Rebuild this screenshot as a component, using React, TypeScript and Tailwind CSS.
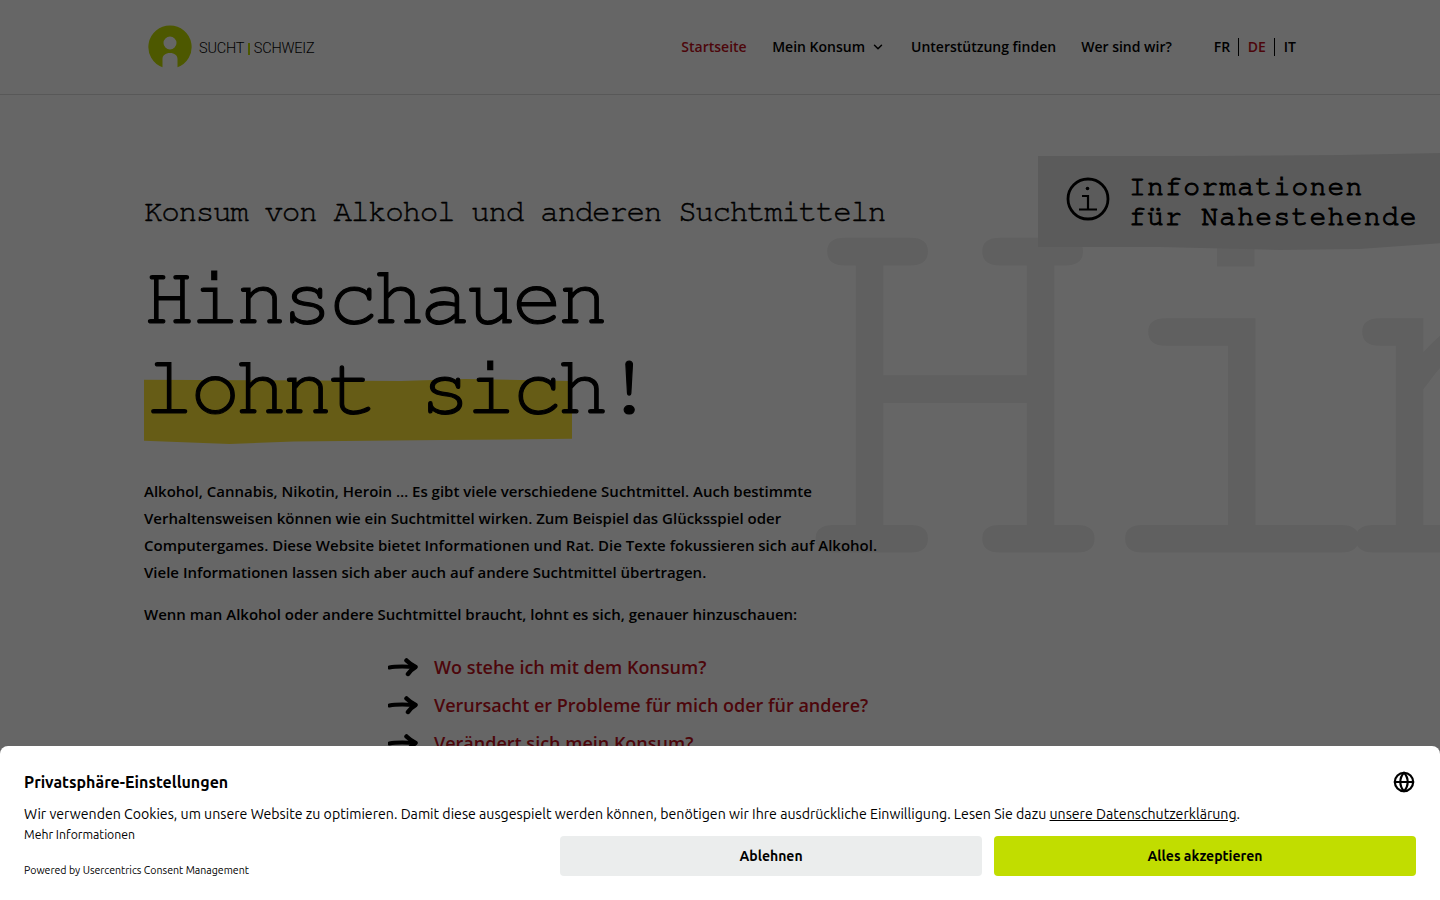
import { Globe, ChevronDown } from "lucide-react";

const mono = "font-['FreeMono','Liberation_Mono',monospace]";
const sans = "font-['Open_Sans',sans-serif]";
const ui = "font-['Ubuntu','Noto_Sans',sans-serif]";

function Logo() {
  return (
    <div className="flex items-center ml-1 gap-[7px]">
      <svg width="44" height="44" viewBox="0 0 44 44">
        <path
          fill="#c1dd00"
          fillRule="evenodd"
          d="M22 0.500a21.500 21.500 0 0 1 7.500 41.700V34c0-3.500-3-6-7.500-6s-7.500 2.500-7.500 6v8.200A21.500 21.500 0 0 1 22 .5zM22 11.500a6.500 6.500 0 1 0 0 13 6.500 6.500 0 0 0 0-13z"
        />
      </svg>
      <div className="flex items-center text-[14.500px] font-light text-black font-['Roboto',sans-serif] tracking-[-0.2px] mt-[3px]">
        <span>SUCHT</span>
        <span className="mx-[4px] h-[12px] w-[1.500px] bg-[#c1dd00]" />
        <span>SCHWEIZ</span>
      </div>
    </div>
  );
}

function Header() {
  const item = "text-[14px] leading-5 font-semibold";
  return (
    <header className={`h-[95px] border-b border-[#dcdcdc] text-black ${sans}`}>
      <div className="mx-36 h-full flex items-center justify-between">
        <Logo />
        <nav className="flex items-center">
          <span className={`${item} text-[#c0101c] mr-[25.500px]`}>Startseite</span>
          <span className={`${item} flex items-center mr-[26px]`}>
            Mein Konsum
            <ChevronDown size={14} strokeWidth={2.500} className="ml-[6px]" />
          </span>
          <span className={`${item} mr-[25px]`}>Unterstützung finden</span>
          <span className={`${item} mr-[42px]`}>Wer sind wir?</span>
          <span className={`${item}`}>FR</span>
          <span className="ml-[7.500px] mr-2 w-px h-[18px] bg-black" />
          <span className={`${item} text-[#c0101c] ml-[1px]`}>DE</span>
          <span className="mx-2 w-px h-[18px] bg-black" />
          <span className={`${item} ml-[1px]`}>IT</span>
        </nav>
      </div>
    </header>
  );
}

function Arrow() {
  return (
    <svg width="30" height="20" viewBox="0 0 30 20" className="shrink-0">
      <path d="M1.500 10.500 C9 9 18 9.500 27 10" stroke="#000" strokeWidth="4" fill="none" strokeLinecap="round" />
      <path d="M18.500 3.500 C21 6 24 8 27.500 10 C24 12 22 14 20 17" stroke="#000" strokeWidth="4.500" fill="none" strokeLinecap="round" strokeLinejoin="round" />
    </svg>
  );
}

function ListItem({ children }: { children: string }) {
  return (
    <li className="flex items-center gap-[16px] h-[38px]">
      <Arrow />
      <span className={`text-[18px] font-semibold text-[#c0101c] ${sans}`}>{children}</span>
    </li>
  );
}

function Hero() {
  return (
    <main className="relative mx-36 pt-[99px]">
      <p className={`${mono} text-[31px] tracking-[-1.370px] leading-9 text-black [-webkit-text-stroke:0.4px_#000]`}>
        Konsum von Alkohol und anderen Suchtmitteln
      </p>
      <h1 className={`${mono} mt-[23px] text-[84px] tracking-[-4.400px] leading-[90px] font-normal text-black [-webkit-text-stroke:1.200px_#000]`}>
        <span className="block">Hinschauen</span>
        <span className="relative block">
          <span className="absolute left-0 top-[36px] w-[428px] h-[65px] bg-[#ffe639] [clip-path:polygon(0_1%,30%_2%,60%_3%,75%_0,100%_3%,100%_92%,70%_94%,35%_96%,20%_100%,0_95%)]" />
          <span className="relative">lohnt sich!</span>
        </span>
      </h1>
      <div className={`${sans} mt-[45px] text-[15px] leading-[27px] font-semibold text-black w-[760px]`}>
        <p>
          Alkohol, Cannabis, Nikotin, Heroin … Es gibt viele verschiedene Suchtmittel. Auch bestimmte
          <br />
          Verhaltensweisen können wie ein Suchtmittel wirken. Zum Beispiel das Glücksspiel oder
          <br />
          Computergames. Diese Website bietet Informationen und Rat. Die Texte fokussieren sich auf Alkohol.
          <br />
          Viele Informationen lassen sich aber auch auf andere Suchtmittel übertragen.
        </p>
        <p className="mt-[15px]">Wenn man Alkohol oder andere Suchtmittel braucht, lohnt es sich, genauer hinzuschauen:</p>
      </div>
      <ul className="mt-[20px] ml-[244px]">
        <ListItem>Wo stehe ich mit dem Konsum?</ListItem>
        <ListItem>Verursacht er Probleme für mich oder für andere?</ListItem>
        <ListItem>Verändert sich mein Konsum?</ListItem>
      </ul>
    </main>
  );
}

function InfoTag() {
  return (
    <div className="absolute right-0 top-[153px] w-[402px] h-[97px] bg-[#e4e4e4] flex items-center pl-[28px] gap-[19px] [clip-path:polygon(0_3%,40%_3%,75%_2%,100%_0,100%_93%,80%_99%,60%_100%,30%_97%,0_97%)]">
      <svg width="44" height="44" viewBox="0 0 44 44" className="shrink-0 -mt-[5px]">
        <circle cx="22" cy="22" r="20" fill="none" stroke="#000" strokeWidth="2.800" />
        <circle cx="21.500" cy="11.500" r="1.800" fill="#000" />
        <path d="M16 19h6v13M13 32.500h18" fill="none" stroke="#000" strokeWidth="2.200" />
      </svg>
      <p className={`${mono} text-[28px] leading-[30px] tracking-[1.250px] text-black whitespace-nowrap [-webkit-text-stroke:1px_#000]`}>
        Informationen
        <br />
        für Nahestehende
      </p>
    </div>
  );
}

function Consent() {
  return (
    <section className={`absolute inset-x-0 bottom-0 h-[154px] bg-white rounded-t-lg px-6 pt-[26px] text-black ${ui}`}>
      <div className="flex items-center justify-between h-5">
        <h2 className="text-[16px] leading-5 font-bold">Privatsphäre-Einstellungen</h2>
        <Globe size={22} strokeWidth={2.400} className="mr-[1px]" />
      </div>
      <p className="mt-[12px] text-[14.160px] leading-5">
        Wir verwenden Cookies, um unsere Website zu optimieren. Damit diese ausgespielt werden können, benötigen wir Ihre ausdrückliche Einwilligung. Lesen Sie dazu <span className="underline">unsere Datenschutzerklärung</span>.
      </p>
      <div className="flex justify-between mt-[1px]">
        <div>
          <p className="text-[12.250px] leading-[20px]">Mehr Informationen</p>
          <p className="mt-[17px] text-[10.600px] leading-[16px]">Powered by Usercentrics Consent Management</p>
        </div>
        <div className="flex gap-3 mt-[11px]">
          <button className="w-[422px] h-10 rounded bg-[#ebeded] text-[14px] font-bold">Ablehnen</button>
          <button className="w-[422px] h-10 rounded bg-[#c1dd00] text-[14px] font-bold">Alles akzeptieren</button>
        </div>
      </div>
    </section>
  );
}

export default function App() {
  return (
    <div className="relative h-screen overflow-hidden bg-white">
      <div aria-hidden className={`absolute left-[789px] top-[115px] text-[550px] leading-[540px] text-[#f0f0f0] whitespace-nowrap [-webkit-text-stroke:5px_#f0f0f0] ${mono}`}>
        <span className="tracking-[-42px]">H</span>
        <span className="tracking-[-78px]">i</span>
        <span>n</span>
      </div>
      <InfoTag />
      <div className="relative">
        <Header />
        <Hero />
      </div>
      <div className="absolute inset-0 bg-black/60" />
      <Consent />
    </div>
  );
}
